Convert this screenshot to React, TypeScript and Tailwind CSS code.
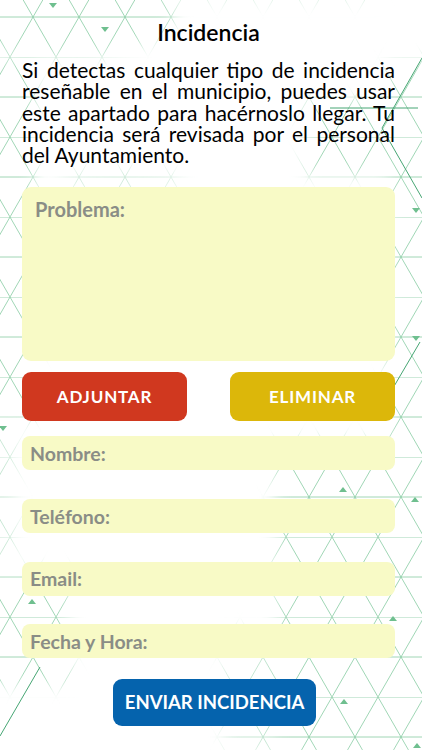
import React from "react";

const lines = [
  "Si detectas cualquier tipo de incidencia",
  "reseñable en el municipio, puedes usar",
  "este apartado para hacérnoslo llegar. Tu",
  "incidencia será revisada por el personal",
];

const fields = ["Nombre:", "Teléfono:", "Email:", "Fecha y Hora:"];

// small filled triangles sprinkled on the grid
const marks = [
  { x: 53, y: 3, d: 1 },
  { x: 105, y: 27, d: 1 },
  { x: 416, y: 208, d: 1 },
  { x: 416, y: 336, d: 1 },
  { x: 3, y: 426, d: 1 },
  { x: 343, y: 487, d: -1 },
  { x: 415, y: 497, d: -1 },
  { x: 32, y: 599, d: -1 },
  { x: 393, y: 616, d: -1 },
  { x: 344, y: 699, d: -1 },
  { x: 417, y: 743, d: -1 },
];

function Background() {
  return (
    <svg className="absolute inset-0 w-full h-full" viewBox="0 0 422 750" preserveAspectRatio="none">
      <defs>
        <pattern id="tri" width="46" height="80" patternUnits="userSpaceOnUse" x="10" y="-23">
          <path d="M0 0H46M0 40H46M0 0L46 80M46 0L0 80" stroke="#86cca2" strokeWidth="0.8" fill="none" />
        </pattern>
        <filter id="soft" x="-50%" y="-50%" width="200%" height="200%">
          <feGaussianBlur stdDeviation="8" />
        </filter>
        <mask id="patch" maskUnits="userSpaceOnUse" x="0" y="0" width="422" height="750">
          <g filter="url(#soft)" fill="#fff">
            <ellipse cx="60" cy="15" rx="115" ry="42" />
            <rect x="120" y="-10" width="260" height="12" opacity="0.5" />
            <rect x="-20" y="60" width="55" height="360" />
            <rect x="-20" y="430" width="35" height="130" opacity="0.6" />
            <rect x="-20" y="570" width="90" height="115" />
            <ellipse cx="120" cy="180" rx="65" ry="10" opacity="0.6" />
            <rect x="305" y="100" width="140" height="75" />
            <rect x="388" y="60" width="60" height="420" />
            <rect x="275" y="440" width="170" height="320" />
            <rect x="225" y="630" width="60" height="120" opacity="0.6" />
          </g>
        </mask>
      </defs>
      <rect width="422" height="750" fill="url(#tri)" mask="url(#patch)" />
      <path d="M422 58L382 128L402 163L422 198M393 388L420 342M0 736L40 667M330 108L418 108" stroke="#47a674" strokeWidth="1" fill="none" />
      {marks.map((m, i) => (
        <path
          key={i}
          d={m.d > 0 ? `M${m.x - 4} ${m.y}h8l-4 5z` : `M${m.x - 4} ${m.y + 5}h8l-4 -5z`}
          fill="#6fbf8f"
        />
      ))}
    </svg>
  );
}

export default function App() {
  return (
    <div className="relative w-[422px] h-[750px] overflow-hidden bg-white font-['Lato',sans-serif]">
      <Background />
      <div className="relative flex flex-col pl-[22px] pr-[27px] pt-[18px]">
        <h1 className="text-center text-[23px] font-semibold leading-[28px] text-black">Incidencia</h1>
        <div className="mt-[13px] text-[21px] leading-[21.3px] text-black">
          {lines.map((l) => (
            <span key={l} className="block text-justify [text-align-last:justify]">
              {l}
            </span>
          ))}
          <span className="block">del Ayuntamiento.</span>
        </div>

        <div className="mt-[22px] h-[174px] rounded-[9px] bg-[#f8fac6] px-[13px] pt-[7px]">
          <span className="text-[20px] font-bold text-[#8a8d86]">Problema:</span>
        </div>

        <div className="mt-[11px] flex justify-between">
          <button className="h-[49px] w-[165px] rounded-[9px] bg-[#d0381f] text-[17px] font-bold tracking-[0.8px] text-white">
            ADJUNTAR
          </button>
          <button className="h-[49px] w-[165px] rounded-[9px] bg-[#dcb70a] text-[17px] font-bold tracking-[0.8px] text-white">
            ELIMINAR
          </button>
        </div>

        <div className="mt-[15px] flex flex-col gap-[28.67px]">
          {fields.map((f) => (
            <div key={f} className="flex h-[34px] items-center rounded-[8px] bg-[#f8fac6] px-[8px]">
              <span className="text-[19.5px] font-bold text-[#8a8d86]">{f}</span>
            </div>
          ))}
        </div>

        <div className="mt-[21px] flex justify-center pl-[12px]">
          <button className="h-[47px] w-[203px] rounded-[9px] bg-[#0563ad] text-[18.5px] font-bold text-white">
            ENVIAR INCIDENCIA
          </button>
        </div>
      </div>
    </div>
  );
}
